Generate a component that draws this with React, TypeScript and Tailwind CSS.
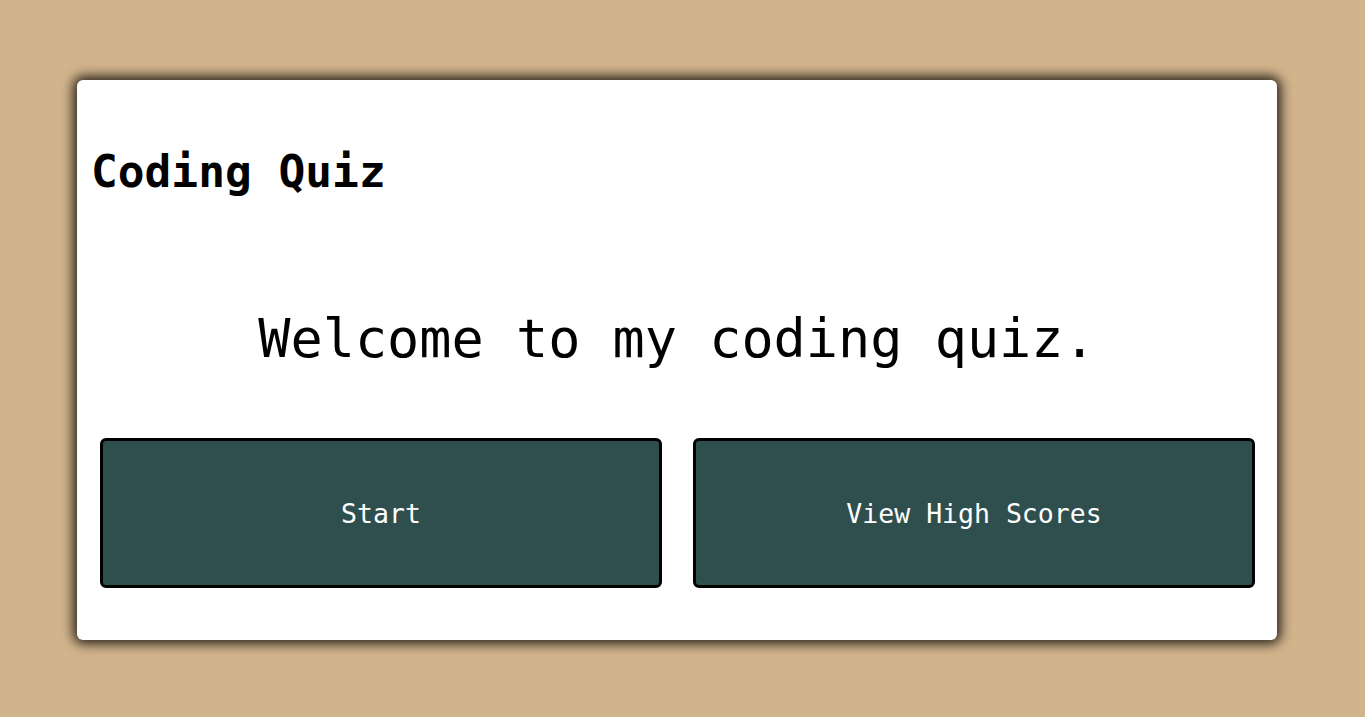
const mono = "font-['DejaVu_Sans_Mono','Liberation_Mono',monospace]";

export default function App() {
  return (
    <div className={`min-h-[717px] w-full bg-[#d2b48c] pt-[80px] pl-[77px] ${mono}`}>
      <div className="flex w-[1200px] h-[560px] flex-col rounded-[6px] bg-white pt-[70px] shadow-[0_0_12px_4px_rgba(0,0,0,0.8)]">
        <h1 className="ml-[14px] h-[44px] text-[44.5px] font-bold leading-none text-black">
          Coding Quiz
        </h1>

        <p className="mt-[118px] h-[53px] text-center text-[53.5px] leading-none text-black">
          Welcome to my coding quiz.
        </p>

        <div className="mt-[73px] flex gap-[31px] px-[23px] pr-[22px]">
          <button className="flex h-[150px] flex-1 items-center justify-center rounded-[6px] border-[3px] border-black bg-[#2f4f4f] pt-[2px] text-[26.5px] text-white">
            Start
          </button>
          <button className="flex h-[150px] flex-1 items-center justify-center rounded-[6px] border-[3px] border-black bg-[#2f4f4f] pt-[2px] text-[26.5px] text-white">
            View High Scores
          </button>
        </div>
      </div>
    </div>
  );
}
